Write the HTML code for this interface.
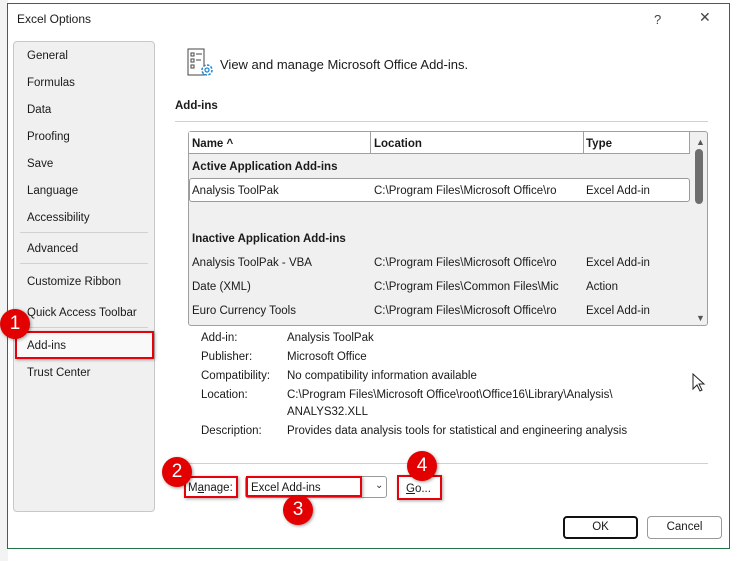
<!DOCTYPE html><html><head><style>
*{margin:0;padding:0;box-sizing:border-box}
body{width:738px;height:561px;background:#fff;font-family:"Liberation Sans",sans-serif;font-size:11.5px;line-height:17px;color:#1a1a1a;position:relative;overflow:hidden}
.a{position:absolute;white-space:nowrap}
.b{font-weight:bold}
.badge{position:absolute;width:30px;height:30px;border-radius:50%;background:#e30000;color:#fff;font-size:19px;text-align:center;line-height:30px;box-shadow:1px 1px 3px rgba(0,0,0,.4)}
.red{position:absolute;border:2px solid #e8000b;box-shadow:1px 1px 3px rgba(0,0,0,.35)}
</style></head><body>
<div class="a" style="left:0;top:0;width:8px;height:561px;background:#f3f3f3"></div>
<div class="a" style="left:7px;top:3px;width:723px;height:546px;border:1px solid #217346;background:#fff"></div>
<div class="a" style="left:17px;top:11px;font-size:12px">Excel Options</div>
<div class="a" style="left:654px;top:11px;font-size:13px;color:#444">?</div>
<div class="a" style="left:699px;top:9px;font-size:14px;color:#444">✕</div>

<div class="a" style="left:13px;top:41px;width:142px;height:471px;background:#f0f0f0;border:1px solid #c8c8c8;border-radius:4px"></div>
<div class="a" style="left:27px;top:48px">General</div>
<div class="a" style="left:27px;top:75px">Formulas</div>
<div class="a" style="left:27px;top:102px">Data</div>
<div class="a" style="left:27px;top:129px">Proofing</div>
<div class="a" style="left:27px;top:156px">Save</div>
<div class="a" style="left:27px;top:183px">Language</div>
<div class="a" style="left:27px;top:210px">Accessibility</div>
<div class="a" style="left:20px;top:232px;width:128px;height:1px;background:#d0d0d0"></div>
<div class="a" style="left:27px;top:241px">Advanced</div>
<div class="a" style="left:20px;top:263px;width:128px;height:1px;background:#d0d0d0"></div>
<div class="a" style="left:27px;top:274px">Customize Ribbon</div>
<div class="a" style="left:27px;top:305px">Quick Access Toolbar</div>
<div class="a" style="left:20px;top:327px;width:128px;height:1px;background:#d0d0d0"></div>
<div class="a" style="left:16px;top:332px;width:137px;height:26px;background:#f9f9f9"></div>
<div class="red" style="left:15px;top:331px;width:139px;height:28px"></div>
<div class="a" style="left:27px;top:338px">Add-ins</div>
<div class="a" style="left:27px;top:365px">Trust Center</div>
<div class="badge" style="left:0;top:309px">1</div>

<svg class="a" style="left:187px;top:48px" width="28" height="30" viewBox="0 0 28 30"><path d="M1 1h16v26H1z" fill="#fff" stroke="#444"/><rect x="4" y="5" width="3" height="3" fill="none" stroke="#444"/><rect x="4" y="11" width="3" height="3" fill="none" stroke="#444"/><rect x="4" y="17" width="3" height="3" fill="none" stroke="#444"/><path d="M9 6h6M9 12h5" stroke="#444"/><circle cx="20" cy="22" r="5" fill="#fff" stroke="#1e88d6" stroke-width="1.5" stroke-dasharray="2.5 1.4"/><circle cx="20" cy="22" r="2" fill="none" stroke="#1e88d6" stroke-width="1.3"/></svg>
<div class="a" style="left:220px;top:56px;font-size:13px">View and manage Microsoft Office Add-ins.</div>
<div class="a b" style="left:175px;top:98px">Add-ins</div>
<div class="a" style="left:175px;top:121px;width:533px;height:1px;background:#d0d0d0"></div>

<div class="a" style="left:188px;top:131px;width:520px;height:195px;background:#f0f0f0;border:1px solid #a0a0a0;border-radius:3px"></div>
<div class="a" style="left:189px;top:132px;width:501px;height:22px;background:#fff;border-bottom:1px solid #a0a0a0"></div>
<div class="a" style="left:370px;top:132px;width:1px;height:22px;background:#a0a0a0"></div>
<div class="a" style="left:583px;top:132px;width:1px;height:22px;background:#a0a0a0"></div>
<div class="a" style="left:689px;top:132px;width:1px;height:22px;background:#a0a0a0"></div>
<div class="a b" style="left:192px;top:136px">Name ^</div>
<div class="a b" style="left:374px;top:136px">Location</div>
<div class="a b" style="left:586px;top:136px">Type</div>
<div class="a" style="left:696px;top:134px;font-size:9px;color:#555">▲</div>
<div class="a" style="left:695px;top:149px;width:8px;height:55px;background:#6e6e6e;border-radius:4px"></div>
<div class="a" style="left:696px;top:310px;font-size:9px;color:#555">▼</div>
<div class="a b" style="left:192px;top:159px">Active Application Add-ins</div>
<div class="a" style="left:189px;top:178px;width:501px;height:24px;background:#fff;border:1px solid #999;border-radius:3px"></div>
<div class="a" style="left:192px;top:183px">Analysis ToolPak</div>
<div class="a" style="left:374px;top:183px">C:\Program Files\Microsoft Office\ro</div>
<div class="a" style="left:586px;top:183px">Excel Add-in</div>
<div class="a b" style="left:192px;top:231px">Inactive Application Add-ins</div>
<div class="a" style="left:192px;top:255px">Analysis ToolPak - VBA</div>
<div class="a" style="left:374px;top:255px">C:\Program Files\Microsoft Office\ro</div>
<div class="a" style="left:586px;top:255px">Excel Add-in</div>
<div class="a" style="left:192px;top:279px">Date (XML)</div>
<div class="a" style="left:374px;top:279px">C:\Program Files\Common Files\Mic</div>
<div class="a" style="left:586px;top:279px">Action</div>
<div class="a" style="left:192px;top:303px">Euro Currency Tools</div>
<div class="a" style="left:374px;top:303px">C:\Program Files\Microsoft Office\ro</div>
<div class="a" style="left:586px;top:303px">Excel Add-in</div>

<div class="a" style="left:201px;top:330px">Add-in:</div><div class="a" style="left:287px;top:330px">Analysis ToolPak</div>
<div class="a" style="left:201px;top:349px">Publisher:</div><div class="a" style="left:287px;top:349px">Microsoft Office</div>
<div class="a" style="left:201px;top:368px">Compatibility:</div><div class="a" style="left:287px;top:368px">No compatibility information available</div>
<div class="a" style="left:201px;top:387px">Location:</div><div class="a" style="left:287px;top:387px">C:\Program Files\Microsoft Office\root\Office16\Library\Analysis\</div>
<div class="a" style="left:287px;top:404px">ANALYS32.XLL</div>
<div class="a" style="left:201px;top:423px">Description:</div><div class="a" style="left:287px;top:423px">Provides data analysis tools for statistical and engineering analysis</div>
<svg class="a" style="left:692px;top:373px" width="14" height="20"><path d="M1 1v15l4-4 3 6 2-1-3-6h5z" fill="#fff" stroke="#222"/></svg>

<div class="a" style="left:175px;top:463px;width:533px;height:1px;background:#d0d0d0"></div>
<div class="red" style="left:184px;top:476px;width:54px;height:22px"></div>
<div class="a" style="left:188px;top:480px">M<u>a</u>nage:</div>
<div class="a" style="left:245px;top:476px;width:142px;height:22px;border:1px solid #999;border-radius:3px"></div>
<div class="red" style="left:246px;top:476px;width:116px;height:21px"></div>
<div class="a" style="left:251px;top:480px">Excel Add-ins</div>
<div class="a" style="left:375px;top:477px;font-size:10px;color:#333">⌄</div>
<div class="red" style="left:397px;top:475px;width:45px;height:25px"></div>
<div class="a" style="left:406px;top:481px"><u>G</u>o...</div>
<div class="badge" style="left:162px;top:457px">2</div>
<div class="badge" style="left:283px;top:495px">3</div>
<div class="badge" style="left:407px;top:451px">4</div>

<div class="a" style="left:563px;top:516px;width:75px;height:23px;border:2px solid #111;border-radius:4px;text-align:center;line-height:19px">OK</div>
<div class="a" style="left:647px;top:516px;width:75px;height:23px;border:1px solid #999;border-radius:4px;text-align:center;line-height:21px">Cancel</div>
</body></html>
